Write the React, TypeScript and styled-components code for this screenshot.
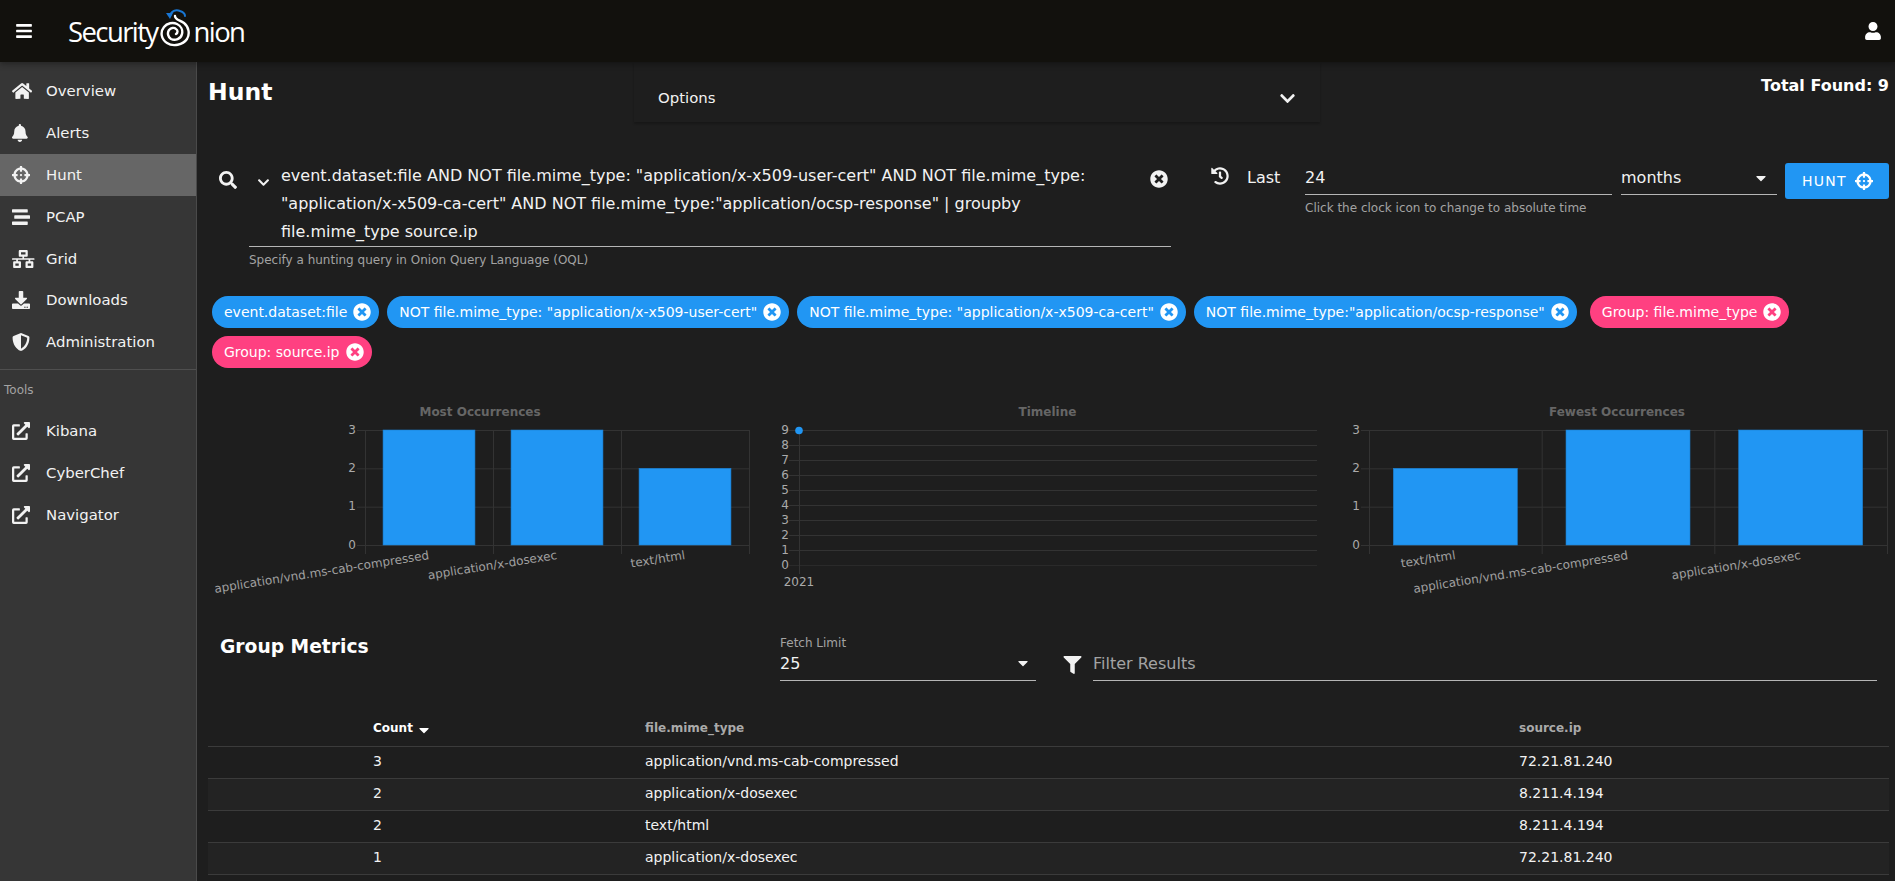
import React from "react";
import styled, { createGlobalStyle } from "styled-components";
import {
  FaBars,
  FaBell,
  FaCaretDown,
  FaChevronDown,
  FaCrosshairs,
  FaDownload,
  FaExternalLinkAlt,
  FaFilter,
  FaHistory,
  FaHome,
  FaNetworkWired,
  FaSearch,
  FaShieldAlt,
  FaStream,
  FaTimesCircle,
  FaUser,
} from "react-icons/fa";

const colors = {
  blue: "#2196f3",
  pink: "#ff4081",
  page: "#1e1e1e",
  header: "#12110d",
  side: "#363636",
  active: "#666666",
  text: "#f2f2f2",
  hint: "#a3a3a3",
  line: "#b5b5b5",
  grid: "#333333",
  rowLine: "#3b3b3b",
};

const GlobalStyle = createGlobalStyle`
  html, body {
    margin: 0;
    height: 100%;
    overflow: hidden;
    background: ${colors.page};
    color: ${colors.text};
    font-family: "DejaVu Sans", sans-serif;
  }
  * { box-sizing: border-box; }
`;

const Page = styled.div`
  display: flex;
  flex-direction: column;
  width: 1895px;
  height: 881px;
  overflow: hidden;
`;

const Header = styled.header`
  display: flex;
  flex: none;
  align-items: center;
  height: 62px;
  padding: 0 13px 0 15px;
  background: ${colors.header};
  box-shadow: 0 2px 6px rgba(0, 0, 0, 0.35);
  position: relative;
  z-index: 2;
  color: #fff;
`;

const Logo = styled.div`
  display: flex;
  align-items: flex-start;
  height: 48px;
  margin: 2px 0 0 35px;
`;

const LogoText = styled.span`
  font-family: "Open Sans", sans-serif;
  font-weight: 400;
  font-size: 27.5px;
  line-height: 32px;
  letter-spacing: -1.6px;
  margin-top: 8px;
  color: #fff;
`;

const SpiralMark = styled.svg`
  flex: none;
  margin: 0 3px 0 2px;
`;

const Spacer = styled.div`
  flex: 1;
`;

const Body = styled.div`
  display: flex;
  flex: 1;
  min-height: 0;
`;

const Side = styled.nav`
  flex: none;
  width: 197px;
  padding-top: 8px;
  background: ${colors.side};
  border-right: 1px solid #4a4a4a;
`;

const NavItem = styled.div<{ $active?: boolean }>`
  display: flex;
  align-items: center;
  height: 41.9px;
  padding-left: 12px;
  font-size: 14.9px;
  color: ${colors.text};
  background: ${(p) => (p.$active ? colors.active : "transparent")};
`;

const NavIcon = styled.span<{ $width: number }>`
  display: flex;
  align-items: center;
  width: 34px;
  flex: none;
  svg {
    height: 18px;
    width: ${(p) => p.$width}px;
  }
`;

const SideRule = styled.div`
  height: 1px;
  margin-top: 6px;
  background: #4f4f4f;
`;

const SideTitle = styled.div`
  padding: 12px 4px 0;
  height: 40px;
  font-size: 12px;
  line-height: 16px;
  color: ${colors.hint};
`;

const Main = styled.main`
  flex: 1;
  min-width: 0;
`;

const TopRow = styled.div`
  display: grid;
  grid-template-columns: 437px 686px 1fr;
  height: 60px;
`;

const Title = styled.h1`
  margin: 0;
  padding: 14px 0 0 11px;
  font-size: 23.5px;
  line-height: 32px;
  font-weight: 700;
  color: #fff;
`;

const OptionsPanel = styled.div`
  display: flex;
  align-items: center;
  justify-content: space-between;
  height: 60px;
  padding: 12px 24px 0;
  background: ${colors.page};
  box-shadow: 0 2px 2px rgba(0, 0, 0, 0.22);
  font-size: 14.9px;
`;

const Total = styled.div`
  padding: 14px 6px 0 0;
  font-size: 16px;
  line-height: 20px;
  font-weight: 700;
  text-align: right;
  color: #fff;
`;

const QueryRow = styled.div`
  display: flex;
  align-items: flex-start;
  padding: 39px 0 0 22px;
  height: 174px;
`;

const SearchBox = styled.span`
  flex: none;
  display: flex;
  margin-top: 10px;
  width: 18px;
`;

const QueryWrap = styled.div`
  flex: none;
  width: 922px;
  margin-left: 12px;
`;

const QueryField = styled.div`
  display: flex;
  align-items: flex-start;
  height: 86px;
  padding-left: 8px;
  border-bottom: 1px solid ${colors.line};
`;

const QueryChevron = styled.span`
  flex: none;
  display: flex;
  width: 24px;
  margin-top: 15px;
`;

const QueryText = styled.div`
  flex: none;
  width: 850px;
  padding-top: 1px;
  font-size: 16px;
  line-height: 28px;
  color: ${colors.text};
`;

const QueryClear = styled.span`
  display: flex;
  margin: 9px 0 0 19px;
`;

const Hint = styled.div`
  margin-top: 5px;
  font-size: 12px;
  line-height: 16px;
  color: ${colors.hint};
`;

const HistoryBox = styled.span`
  flex: none;
  display: flex;
  margin: 6px 0 0 40px;
`;

const LastLabel = styled.div`
  flex: none;
  width: 58px;
  margin-left: 18px;
  padding-top: 1px;
  font-size: 16px;
  line-height: 32px;
`;

const TimeField = styled.div<{ $width: number; $left?: number }>`
  flex: none;
  width: ${(p) => p.$width}px;
  margin-left: ${(p) => p.$left ?? 0}px;
`;

const TimeValue = styled.div`
  display: flex;
  align-items: center;
  justify-content: space-between;
  height: 34px;
  padding: 1px 8px 1px 0;
  font-size: 16px;
  border-bottom: 1px solid ${colors.line};
`;

const HuntButton = styled.button`
  flex: none;
  display: flex;
  align-items: center;
  justify-content: space-between;
  width: 104px;
  height: 36px;
  margin: 2px 0 0 8px;
  padding: 0 16px 0 17px;
  border: none;
  border-radius: 3px;
  background: ${colors.blue};
  color: #fff;
  font-family: inherit;
  font-size: 14px;
  letter-spacing: 1.25px;
`;

const Chips = styled.div`
  display: flex;
  flex-wrap: wrap;
  gap: 8px;
  padding-left: 15px;
`;

const Chip = styled.span<{ $kind: "term" | "group"; $push?: boolean }>`
  display: inline-flex;
  align-items: center;
  height: 32px;
  padding: 0 8px 0 12px;
  margin-left: ${(p) => (p.$push ? 5 : 0)}px;
  border-radius: 16px;
  font-size: 14px;
  white-space: nowrap;
  color: #fff;
  background: ${(p) => (p.$kind === "group" ? colors.pink : colors.blue)};
  svg {
    margin-left: 6px;
  }
`;

const ChartRow = styled.div`
  display: grid;
  grid-template-columns: 550px 555px 554px;
  column-gap: 15px;
  margin-top: 36px;
  padding-left: 8px;
`;

const ChartBox = styled.div`
  display: flex;
  flex-direction: column;
`;

const ChartTitle = styled.div`
  height: 16px;
  font-size: 12px;
  line-height: 16px;
  font-weight: 700;
  text-align: center;
  color: #666;
`;

const ChartSvg = styled.svg`
  display: block;
  font-family: "DejaVu Sans", sans-serif;
  font-size: 12px;
`;

const GroupRow = styled.div`
  display: flex;
  align-items: flex-end;
  height: 81px;
  margin-top: 33px;
  padding: 3px 0 33px 0;
`;

const GroupTitle = styled.h2`
  flex: none;
  align-self: flex-start;
  width: 583px;
  margin: 0;
  padding: 1px 0 0 23px;
  font-size: 18.7px;
  line-height: 20px;
  font-weight: 700;
  color: #fff;
`;

const FetchField = styled.div`
  flex: none;
  width: 256px;
`;

const FetchLabel = styled.div`
  margin-bottom: 1px;
  font-size: 12px;
  line-height: 16px;
  color: ${colors.hint};
`;

const FetchValue = styled.div`
  display: flex;
  align-items: center;
  justify-content: space-between;
  height: 29px;
  padding: 0 5px 6px 0;
  font-size: 16px;
  border-bottom: 1px solid ${colors.line};
`;

const FilterBox = styled.span`
  flex: none;
  display: flex;
  margin: 0 11px 7px 27px;
  svg {
    height: 18px;
    width: 19px;
  }
`;

const FilterField = styled.div`
  flex: none;
  width: 784px;
  height: 29px;
  padding-top: 1px;
  font-size: 16px;
  line-height: 22px;
  color: ${colors.hint};
  border-bottom: 1px solid ${colors.line};
`;

const MetricTable = styled.table`
  width: 1681px;
  margin-left: 11px;
  border-collapse: collapse;
  table-layout: fixed;
`;

const HeadCell = styled.th<{ $sorted?: boolean }>`
  height: 32px;
  padding: 0 16px 4px;
  font-size: 12px;
  font-weight: 700;
  text-align: left;
  color: ${(p) => (p.$sorted ? "#fff" : "#aaa")};
  border-bottom: 1px solid ${colors.rowLine};
  svg {
    margin: 0 0 -6px 3px;
  }
`;

const Row = styled.tr<{ $shade?: boolean }>`
  background: ${(p) => (p.$shade ? "#232323" : "transparent")};
`;

const Cell = styled.td`
  height: 32px;
  padding: 0 16px 2px;
  font-size: 14px;
  color: ${colors.text};
  border-bottom: 1px solid ${colors.rowLine};
`;

const Spiral: React.FC = () => (
  <SpiralMark width="31" height="42" viewBox="0 0 31 42">
    <path
      d="M15 8c0 4 5 4 9 7 5 4 6 11 3 16-4 6-14 8-20 4C1 31 0 24 4 19c3-4 9-5 13-3 4 2 6 6 5 10-1 5-7 7-11 5-3-2-4-6-2-9 2-2 5-3 7-1 2 1 2 4 0 5"
      fill="none"
      stroke="#fff"
      strokeWidth="2.4"
      strokeLinecap="round"
    />
    <path d="M10 8C11 3 16 1 20 3c3 1 5 3 5 5" fill="none" stroke="#1976d2" strokeWidth="2" strokeLinecap="round" />
    <path d="M6 5l7 0-3 6z" fill="#1976d2" />
  </SpiralMark>
);

type Bar = { label: string; value: number };

const BarChart: React.FC<{
  title: string;
  width: number;
  left: number;
  right: number;
  bars: Bar[];
}> = ({ title, width, left, right, bars }) => {
  const top = 10;
  const bottom = 125;
  const step = (bottom - top) / 3;
  const cat = (right - left) / bars.length;
  return (
    <ChartBox>
      <ChartTitle>{title}</ChartTitle>
      <ChartSvg width={width} height={180}>
        {[0, 1, 2, 3].map((n) => {
          const y = bottom - n * step + 0.5;
          return (
            <g key={n}>
              <line x1={left - 8} x2={right} y1={y} y2={y} stroke={colors.grid} />
              <text x={left - 9} y={y + 3} textAnchor="end" fill="#aaa">
                {n}
              </text>
            </g>
          );
        })}
        {[0, 1, 2, 3].map((n) => {
          const x = left + n * cat + 0.5;
          return <line key={n} x1={x} x2={x} y1={top} y2={bottom + 9} stroke={colors.grid} />;
        })}
        {bars.map((b, i) => {
          const w = cat * 0.718;
          const x = left + i * cat + (cat - w) / 2;
          const cx = left + i * cat + cat / 2;
          return (
            <g key={b.label}>
              <rect x={x} y={bottom - b.value * step} width={w} height={b.value * step} fill={colors.blue} stroke="#1b7fd0" strokeWidth="0.6" />
              <text
                x={cx}
                y={bottom + 14}
                textAnchor="end"
                fill="#a0a0a0"
                transform={`rotate(-9 ${cx} ${bottom + 10})`}
              >
                {b.label}
              </text>
            </g>
          );
        })}
      </ChartSvg>
    </ChartBox>
  );
};

const Timeline: React.FC = () => {
  const left = 29;
  const right = 547;
  const top = 10;
  const step = 15;
  return (
    <ChartBox>
      <ChartTitle>Timeline</ChartTitle>
      <ChartSvg width={555} height={180}>
        {[0, 1, 2, 3, 4, 5, 6, 7, 8, 9].map((n) => {
          const y = top + (9 - n) * step + 0.5;
          return (
            <g key={n}>
              <line x1={left - 10} x2={right} y1={y} y2={y} stroke={n === 0 ? "#2a2a2a" : colors.grid} />
              <text x={left - 10} y={y + 3} textAnchor="end" fill="#aaa">
                {n}
              </text>
            </g>
          );
        })}
        <line x1={left + 0.5} x2={left + 0.5} y1={top} y2={top + 9 * step + 9} stroke={colors.grid} />
        <text x={left} y={top + 9 * step + 21} textAnchor="middle" fill="#aaa">
          2021
        </text>
        <circle cx={left} cy={top + 0.5} r={3.8} fill={colors.blue} />
      </ChartSvg>
    </ChartBox>
  );
};

const navItems = [
  { name: "Overview", icon: <FaHome />, width: 20.25 },
  { name: "Alerts", icon: <FaBell />, width: 15.75 },
  { name: "Hunt", icon: <FaCrosshairs />, width: 18, active: true },
  { name: "PCAP", icon: <FaStream />, width: 18 },
  { name: "Grid", icon: <FaNetworkWired />, width: 22.5 },
  { name: "Downloads", icon: <FaDownload />, width: 18 },
  { name: "Administration", icon: <FaShieldAlt />, width: 18 },
];

const tools = ["Kibana", "CyberChef", "Navigator"];

const chips = [
  { text: "event.dataset:file", kind: "term" as const },
  { text: 'NOT file.mime_type: "application/x-x509-user-cert"', kind: "term" as const },
  { text: 'NOT file.mime_type: "application/x-x509-ca-cert"', kind: "term" as const },
  { text: 'NOT file.mime_type:"application/ocsp-response"', kind: "term" as const },
  { text: "Group: file.mime_type", kind: "group" as const, push: true },
  { text: "Group: source.ip", kind: "group" as const },
];

const rows = [
  { count: 3, mime: "application/vnd.ms-cab-compressed", ip: "72.21.81.240" },
  { count: 2, mime: "application/x-dosexec", ip: "8.211.4.194" },
  { count: 2, mime: "text/html", ip: "8.211.4.194" },
  { count: 1, mime: "application/x-dosexec", ip: "72.21.81.240" },
];

const App: React.FC = () => {
  return (
    <Page>
      <GlobalStyle />
      <Header>
        <FaBars size={18} />
        <Logo>
          <LogoText>Security</LogoText>
          <Spiral />
          <LogoText>nion</LogoText>
        </Logo>
        <Spacer />
        <FaUser size={18} />
      </Header>
      <Body>
        <Side>
          {navItems.map((item) => (
            <NavItem key={item.name} $active={item.active}>
              <NavIcon $width={item.width}>{item.icon}</NavIcon>
              {item.name}
            </NavItem>
          ))}
          <SideRule />
          <SideTitle>Tools</SideTitle>
          {tools.map((name) => (
            <NavItem key={name}>
              <NavIcon $width={18}>
                <FaExternalLinkAlt />
              </NavIcon>
              {name}
            </NavItem>
          ))}
        </Side>
        <Main>
          <TopRow>
            <Title>Hunt</Title>
            <OptionsPanel>
              Options
              <FaChevronDown size={17} />
            </OptionsPanel>
            <Total>Total Found: 9</Total>
          </TopRow>
          <QueryRow>
            <SearchBox>
              <FaSearch size={18} />
            </SearchBox>
            <QueryWrap>
              <QueryField>
                <QueryChevron>
                  <FaChevronDown size={13} />
                </QueryChevron>
                <QueryText>
                  event.dataset:file AND NOT file.mime_type: "application/x-x509-user-cert" AND NOT file.mime_type:
                  "application/x-x509-ca-cert" AND NOT file.mime_type:"application/ocsp-response" | groupby
                  file.mime_type source.ip
                </QueryText>
                <QueryClear>
                  <FaTimesCircle size={18} />
                </QueryClear>
              </QueryField>
              <Hint>Specify a hunting query in Onion Query Language (OQL)</Hint>
            </QueryWrap>
            <HistoryBox>
              <FaHistory size={18} />
            </HistoryBox>
            <LastLabel>Last</LastLabel>
            <TimeField $width={307}>
              <TimeValue>24</TimeValue>
              <Hint>Click the clock icon to change to absolute time</Hint>
            </TimeField>
            <TimeField $width={156} $left={9}>
              <TimeValue>
                months
                <FaCaretDown size={16} />
              </TimeValue>
            </TimeField>
            <HuntButton>
              HUNT
              <FaCrosshairs size={18} />
            </HuntButton>
          </QueryRow>
          <Chips>
            {chips.map((c) => (
              <Chip key={c.text} $kind={c.kind} $push={c.push}>
                {c.text}
                <FaTimesCircle size={18} />
              </Chip>
            ))}
          </Chips>
          <ChartRow>
            <BarChart
              title="Most Occurrences"
              width={550}
              left={160}
              right={544}
              bars={[
                { label: "application/vnd.ms-cab-compressed", value: 3 },
                { label: "application/x-dosexec", value: 3 },
                { label: "text/html", value: 2 },
              ]}
            />
            <Timeline />
            <BarChart
              title="Fewest Occurrences"
              width={554}
              left={29}
              right={547}
              bars={[
                { label: "text/html", value: 2 },
                { label: "application/vnd.ms-cab-compressed", value: 3 },
                { label: "application/x-dosexec", value: 3 },
              ]}
            />
          </ChartRow>
          <GroupRow>
            <GroupTitle>Group Metrics</GroupTitle>
            <FetchField>
              <FetchLabel>Fetch Limit</FetchLabel>
              <FetchValue>
                25
                <FaCaretDown size={16} />
              </FetchValue>
            </FetchField>
            <FilterBox>
              <FaFilter />
            </FilterBox>
            <FilterField>Filter Results</FilterField>
          </GroupRow>
          <MetricTable>
            <colgroup>
              <col style={{ width: 149 }} />
              <col style={{ width: 272 }} />
              <col style={{ width: 874 }} />
              <col />
            </colgroup>
            <thead>
              <tr>
                <HeadCell />
                <HeadCell $sorted>
                  Count
                  <FaCaretDown size={16} />
                </HeadCell>
                <HeadCell>file.mime_type</HeadCell>
                <HeadCell>source.ip</HeadCell>
              </tr>
            </thead>
            <tbody>
              {rows.map((r, i) => (
                <Row key={i} $shade={i % 2 === 1}>
                  <Cell />
                  <Cell>{r.count}</Cell>
                  <Cell>{r.mime}</Cell>
                  <Cell>{r.ip}</Cell>
                </Row>
              ))}
            </tbody>
          </MetricTable>
        </Main>
      </Body>
    </Page>
  );
};

export default App;
